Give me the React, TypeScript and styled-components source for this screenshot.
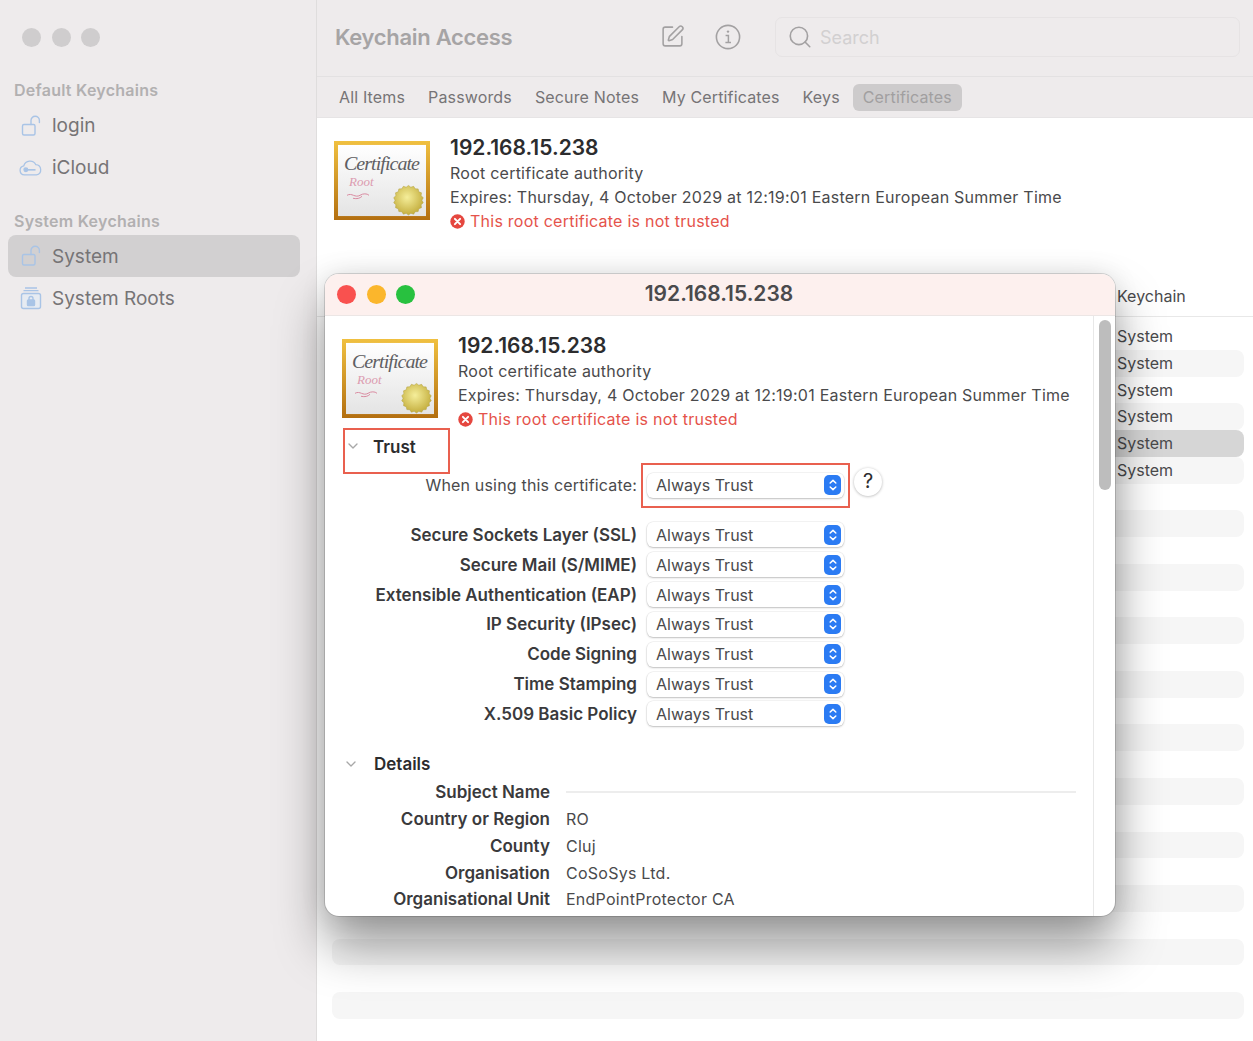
import { useId } from "react";
import styled, { createGlobalStyle } from "styled-components";
import { ChevronDown, Search, SquarePen } from "lucide-react";

const GlobalStyle = createGlobalStyle`
  html, body {
    margin: 0;
    padding: 0;
    height: 100%;
    background: #fff;
    font-family: Inter, "Liberation Sans", sans-serif;
    color: #3a3a3c;
  }
  * { box-sizing: border-box; }
`;

const TRUST_ROWS = [
  "Secure Sockets Layer (SSL)",
  "Secure Mail (S/MIME)",
  "Extensible Authentication (EAP)",
  "IP Security (IPsec)",
  "Code Signing",
  "Time Stamping",
  "X.509 Basic Policy",
];

const DETAIL_ROWS = [
  ["Country or Region", "RO"],
  ["County", "Cluj"],
  ["Organisation", "CoSoSys Ltd."],
  ["Organisational Unit", "EndPointProtector CA"],
];

const TABS = ["All Items", "Passwords", "Secure Notes", "My Certificates", "Keys", "Certificates"];

function OpenLock() {
  return (
    <svg width="24" height="24" viewBox="0 0 24 24" fill="none" stroke="#a9c4e6" strokeWidth="1.4">
      <rect x="4.5" y="10.5" width="12.5" height="10.5" rx="1.5" />
      <path d="M13 10.5V6.5a4.2 4.2 0 0 1 8.4 0v2" strokeLinecap="round" />
    </svg>
  );
}

function KeyCloud() {
  return (
    <svg width="26" height="24" viewBox="0 0 26 24" fill="none" stroke="#a9c4e6" strokeWidth="1.4">
      <path d="M7 19.5a5 5 0 0 1-.7-9.9 7 7 0 0 1 13-1.2 5.6 5.6 0 0 1 .7 11.1z" />
      <circle cx="8.5" cy="14" r="2" fill="#a9c4e6" />
      <path d="M10 14h9" strokeWidth="1.8" />
    </svg>
  );
}

function RootsLock() {
  return (
    <svg width="24" height="24" viewBox="0 0 24 24" fill="none" stroke="#a9c4e6" strokeWidth="1.4">
      <path d="M7 2h12M5.5 4.6h15" />
      <rect x="3.5" y="7.5" width="19" height="15" rx="2" fill="#e6ebf2" />
      <rect x="9.5" y="14" width="7" height="5.5" rx="0.8" fill="#a9c4e6" />
      <path d="M11 14v-1.5a2 2 0 0 1 4 0V14" />
    </svg>
  );
}

function InfoCircle() {
  return (
    <svg width="26" height="26" viewBox="0 0 26 26" fill="none" stroke="#a3a1a2" strokeWidth="1.6">
      <circle cx="13" cy="13" r="11.6" />
      <circle cx="13" cy="7.6" r="1.2" fill="#a3a1a2" stroke="none" />
      <path d="M10.6 11.4H13.4V18.4M10.4 18.6H16" strokeWidth="1.5" />
    </svg>
  );
}

function CertificateIcon() {
  const id = useId();
  return (
    <CertSvg viewBox="0 0 96 80" preserveAspectRatio="none">
      <defs>
        <linearGradient id={id + "frame"} x1="0" y1="0" x2="0" y2="1">
          <stop offset="0" stopColor="#f0c040" />
          <stop offset="1" stopColor="#b36f10" />
        </linearGradient>
        <linearGradient id={id + "paper"} x1="0" y1="0" x2="0" y2="1">
          <stop offset="0" stopColor="#ffffff" />
          <stop offset="1" stopColor="#e4e4e4" />
        </linearGradient>
        <radialGradient id={id + "seal"} cx="0.45" cy="0.4" r="0.6">
          <stop offset="0" stopColor="#f5ee9a" />
          <stop offset="1" stopColor="#c4ae3e" />
        </radialGradient>
      </defs>
      <rect width="96" height="80" fill={`url(#${id}frame)`} />
      <rect x="4" y="4" width="88" height="72" fill={`url(#${id}paper)`} />
      <text x="10" y="29" fontFamily="'Liberation Serif', serif" fontStyle="italic" fontSize="20" fill="#5f5f63" textLength="76">
        Certificate
      </text>
      <text x="15" y="46" fontFamily="'Liberation Serif', serif" fontStyle="italic" fontSize="13" fill="#dc9cb0">
        Root
      </text>
      <path d="M13 55c5-3 8 3 13 0 3-2 7-2 9 0M19 58c4 1 7 0 9-2" fill="none" stroke="#d98aa0" strokeWidth="1" />
      <polygon
        points={Array.from({ length: 36 }, (_, i) => {
          const r = i % 2 ? 15 : 13.4;
          const a = (i * Math.PI) / 18;
          return `${74.5 + r * Math.cos(a)},${60 + r * Math.sin(a)}`;
        }).join(" ")}
        fill={`url(#${id}seal)`}
        stroke="#b39f3c"
        strokeWidth="0.5"
      />
    </CertSvg>
  );
}

function ErrorBadge() {
  return (
    <svg width="15" height="15" viewBox="0 0 15 15">
      <circle cx="7.5" cy="7.5" r="7.2" fill="#e5473f" />
      <path d="M4.9 4.9l5.2 5.2M10.1 4.9l-5.2 5.2" stroke="#fff" strokeWidth="2" strokeLinecap="round" />
    </svg>
  );
}

function Stepper() {
  return (
    <StepperBox>
      <svg width="10" height="14" viewBox="0 0 10 14" fill="none" stroke="#fff" strokeWidth="1.5" strokeLinecap="round" strokeLinejoin="round">
        <path d="M2.2 5L5 2.4 7.8 5M2.2 9L5 11.6 7.8 9" />
      </svg>
    </StepperBox>
  );
}

function TrustSelect() {
  return (
    <SelectBox>
      <span>Always Trust</span>
      <Stepper />
    </SelectBox>
  );
}

function CertSummary() {
  return (
    <Summary>
      <CertificateIcon />
      <SummaryText>
        <CertName>192.168.15.238</CertName>
        <CertLine>Root certificate authority</CertLine>
        <CertLine>Expires: Thursday, 4 October 2029 at 12:19:01 Eastern European Summer Time</CertLine>
        <CertError>
          <ErrorBadge />
          This root certificate is not trusted
        </CertError>
      </SummaryText>
    </Summary>
  );
}

export default function App() {
  return (
    <Desktop>
      <GlobalStyle />
      <Sidebar>
        <Lights>
          <Light $color="#cfcdce" />
          <Light $color="#cfcdce" />
          <Light $color="#cfcdce" />
        </Lights>
        <GroupLabel>Default Keychains</GroupLabel>
        <SideItem><OpenLock />login</SideItem>
        <SideItem><KeyCloud />iCloud</SideItem>
        <GroupLabel $second>System Keychains</GroupLabel>
        <SideItem $active><OpenLock />System</SideItem>
        <SideItem><RootsLock />System Roots</SideItem>
      </Sidebar>

      <Main>
        <Toolbar>
          <AppTitle>Keychain Access</AppTitle>
          <ToolIcons>
            <SquarePen size={25} strokeWidth={1.5} color="#a3a1a2" />
            <InfoCircle />
          </ToolIcons>
          <SearchField>
            <Search size={26} strokeWidth={1.5} color="#a3a1a2" />
            Search
          </SearchField>
        </Toolbar>
        <TabBar>
          {TABS.map((tab) => (
            <Tab key={tab} $active={tab === "Certificates"}>{tab}</Tab>
          ))}
        </TabBar>
        <TopCert>
          <CertSummary />
        </TopCert>
        <ColumnHeader>Keychain</ColumnHeader>
        <Table>
          {Array.from({ length: 26 }, (_, i) => (
            <TableRow key={i} $striped={i % 2 === 1} $selected={i === 4}>
              {i < 6 ? "System" : ""}
            </TableRow>
          ))}
        </Table>
      </Main>

      <Sheet>
        <SheetTitleBar>
          <SheetLights>
            <Light $color="#f9514f" />
            <Light $color="#fbb62c" />
            <Light $color="#28c13f" />
          </SheetLights>
          <SheetTitle>192.168.15.238</SheetTitle>
        </SheetTitleBar>
        <SheetBody>
          <SheetContent>
            <CertSummary />
            <TrustHead>
              <ChevronDown size={16} color="#a8a8a8" />
              Trust
            </TrustHead>
            <WhenRow>
              <WhenLabel>When using this certificate:</WhenLabel>
              <RedBox><TrustSelect /></RedBox>
              <HelpButton>?</HelpButton>
            </WhenRow>
            <PolicyList>
              {TRUST_ROWS.map((row) => (
                <PolicyRow key={row}>
                  <PolicyLabel>{row}</PolicyLabel>
                  <TrustSelect />
                </PolicyRow>
              ))}
            </PolicyList>
            <DetailsHead>
              <ChevronDown size={16} color="#a8a8a8" />
              Details
            </DetailsHead>
            <DetailRow>
              <DetailLabel>Subject Name</DetailLabel>
              <DetailRule />
            </DetailRow>
            {DETAIL_ROWS.map(([label, value]) => (
              <DetailRow key={label}>
                <DetailLabel>{label}</DetailLabel>
                <DetailValue>{value}</DetailValue>
              </DetailRow>
            ))}
          </SheetContent>
          <ScrollGutter>
            <ScrollThumb />
          </ScrollGutter>
        </SheetBody>
      </Sheet>
    </Desktop>
  );
}

const Desktop = styled.div`
  position: relative;
  display: flex;
  width: 1253px;
  height: 1041px;
  overflow: hidden;
  background: #fff;
`;

const Sidebar = styled.aside`
  width: 317px;
  flex: none;
  padding: 28px 16px 0 8px;
  background: #eeebec;
  border-right: 1px solid #dfdddd;
`;

const Lights = styled.div`
  display: flex;
  gap: 10.5px;
  padding-left: 14px;
  margin-bottom: 33px;
`;

const Light = styled.span<{ $color: string }>`
  width: 19px;
  height: 19px;
  border-radius: 50%;
  background: ${(p) => p.$color};
`;

const GroupLabel = styled.div<{ $second?: boolean }>`
  height: 20px;
  margin: ${(p) => (p.$second ? "22px" : "0")} 0 4.5px 6px;
  font-size: 16px;
  line-height: 20px;
  font-weight: 600;
  letter-spacing: 0.25px;
  color: #b2b0b1;
`;

const SideItem = styled.div<{ $active?: boolean }>`
  display: flex;
  align-items: center;
  gap: 10px;
  height: 42px;
  padding-left: 10px;
  border-radius: 8px;
  font-size: 19px;
  color: #767476;
  background: ${(p) => (p.$active ? "#d2d0d1" : "transparent")};

  svg { width: 24px; flex: none; }
`;

const Main = styled.main`
  flex: 1;
  min-width: 0;
  display: flex;
  flex-direction: column;
`;

const Toolbar = styled.header`
  display: flex;
  align-items: center;
  height: 77px;
  padding: 0 13px 3px 18px;
  background: #eeebec;
  border-bottom: 1px solid #e3e1e2;
`;

const AppTitle = styled.h1`
  width: 325px;
  margin: 0;
  font-size: 22px;
  font-weight: 600;
  letter-spacing: -0.3px;
  color: #a6a4a5;
`;

const ToolIcons = styled.div`
  display: flex;
  align-items: center;
  gap: 30px;
  width: 115px;
`;

const SearchField = styled.div`
  flex: 1;
  display: flex;
  align-items: center;
  gap: 7px;
  height: 40px;
  margin-top: 1px;
  padding-left: 11px;
  border: 1px solid #e6e3e4;
  border-radius: 7px;
  font-size: 18px;
  color: #d2d0d1;
`;

const TabBar = styled.nav`
  display: flex;
  align-items: center;
  gap: 3px;
  height: 41px;
  padding-left: 12px;
  background: #eeebec;
  border-bottom: 1px solid #e6e4e5;
`;

const Tab = styled.span<{ $active?: boolean }>`
  padding: 0 10px;
  height: 27px;
  line-height: 27px;
  border-radius: 6px;
  font-size: 16px;
  letter-spacing: 0.15px;
  color: ${(p) => (p.$active ? "#a19fa0" : "#767476")};
  background: ${(p) => (p.$active ? "#cdcbcc" : "transparent")};
`;

const TopCert = styled.section`
  height: 152px;
  padding: 23px 17px 0;
`;

const Summary = styled.div`
  display: flex;
  gap: 20px;
`;

const CertSvg = styled.svg`
  width: 96px;
  height: 79px;
  flex: none;
`;

const SummaryText = styled.div`
  display: flex;
  flex-direction: column;
  margin-top: -6px;
`;

const CertName = styled.div`
  height: 26px;
  font-size: 21px;
  line-height: 26px;
  font-weight: 600;
  color: #2c2c2e;
`;

const CertLine = styled.div`
  height: 24px;
  font-size: 16px;
  line-height: 24px;
  letter-spacing: 0.24px;
  color: #4a4a4c;
`;

const CertError = styled(CertLine)`
  display: flex;
  align-items: center;
  gap: 5px;
  color: #e5534b;
`;

const ColumnHeader = styled.div`
  height: 47px;
  padding: 14px 0 0 800px;
  font-size: 16px;
  line-height: 24px;
  color: #4a4a4c;
  border-bottom: 1px solid #e8e8e8;
`;

const Table = styled.div`
  flex: 1;
  padding: 6px 9px 0 15px;
  overflow: hidden;
`;

const TableRow = styled.div<{ $striped: boolean; $selected: boolean }>`
  height: 26.78px;
  padding-left: 785px;
  border-radius: 8px;
  font-size: 16px;
  line-height: 26px;
  color: #4a4a4c;
  background: ${(p) => (p.$selected ? "#d6d6d6" : p.$striped ? "#f6f6f6" : "transparent")};
`;

const Sheet = styled.div`
  position: absolute;
  left: 325px;
  top: 274px;
  width: 790px;
  height: 642px;
  display: flex;
  flex-direction: column;
  overflow: hidden;
  border-radius: 14px;
  background: #fff;
  box-shadow: 0 0 0 1px rgba(0, 0, 0, 0.14), 0 30px 50px rgba(0, 0, 0, 0.4), 0 0 26px rgba(0, 0, 0, 0.1);
`;

const SheetTitleBar = styled.div`
  position: relative;
  flex: none;
  display: flex;
  align-items: center;
  justify-content: center;
  height: 42px;
  padding-bottom: 2px;
  background: #fdf0ee;
  border-bottom: 1px solid #ece6e5;
`;

const SheetLights = styled.div`
  position: absolute;
  left: 12px;
  top: 11px;
  display: flex;
  gap: 10.5px;
`;

const SheetTitle = styled.div`
  margin-left: -2px;
  font-size: 21px;
  font-weight: 600;
  color: #4a4a4c;
`;

const SheetBody = styled.div`
  flex: 1;
  min-height: 0;
  display: flex;
`;

const SheetContent = styled.div`
  flex: 1;
  min-width: 0;
  padding: 23px 0 0 17px;
  overflow: hidden;
`;

const ScrollGutter = styled.div`
  width: 22px;
  flex: none;
  padding: 4px 4px 0 5px;
  border-left: 1px solid #e8e8e8;
`;

const ScrollThumb = styled.div`
  height: 170px;
  border-radius: 6px;
  background: #bdbdbd;
`;

const TrustHead = styled.div`
  display: flex;
  align-items: flex-start;
  gap: 12px;
  width: 107px;
  height: 46px;
  margin: -3px 0 0 1px;
  padding: 6px 0 0;
  border: 2px solid #e9604f;
  font-size: 17px;
  line-height: 22px;
  font-weight: 600;
  color: #2c2c2e;

  svg { margin-top: 2px; }
`;

const WhenRow = styled.div`
  display: flex;
  align-items: center;
  height: 46px;
  margin-top: -12px;
`;

const WhenLabel = styled.div`
  width: 295px;
  margin-right: 4px;
  text-align: right;
  font-size: 16px;
  letter-spacing: 0.18px;
  color: #4a4a4c;
`;

const RedBox = styled.div`
  display: flex;
  align-items: center;
  width: 209px;
  height: 45px;
  padding-left: 4px;
  border: 2px solid #e9604f;
`;

const HelpButton = styled.div`
  width: 28px;
  height: 28px;
  margin: -6px 0 0 4px;
  border-radius: 50%;
  text-align: center;
  font-size: 20px;
  line-height: 26px;
  color: #2c2c2e;
  background: #fff;
  box-shadow: 0 0.5px 3px rgba(0, 0, 0, 0.3);
`;

const PolicyList = styled.div`
  margin-top: 12px;
`;

const PolicyRow = styled.div`
  display: flex;
  align-items: center;
  gap: 10px;
  height: 29.85px;
`;

const PolicyLabel = styled.div`
  width: 295px;
  text-align: right;
  white-space: nowrap;
  font-size: 17px;
  font-weight: 600;
  color: #3a3a3c;
`;

const SelectBox = styled.div`
  display: flex;
  align-items: center;
  justify-content: space-between;
  width: 197px;
  height: 25px;
  padding: 0 3px 0 9px;
  border-radius: 6px;
  background: #fff;
  font-size: 16px;
  color: #4a4a4c;
  box-shadow: 0 0 0 0.5px rgba(0, 0, 0, 0.08), 0 1px 2px rgba(0, 0, 0, 0.22);
`;

const StepperBox = styled.span`
  display: flex;
  align-items: center;
  justify-content: center;
  width: 17px;
  height: 20px;
  border-radius: 5px;
  background: #2b7bf3;
`;

const DetailsHead = styled.div`
  display: flex;
  align-items: center;
  gap: 15px;
  height: 22px;
  margin: 24px 0 4px;
  padding-left: 1px;
  font-size: 17px;
  font-weight: 600;
  color: #2c2c2e;
`;

const DetailRow = styled.div`
  display: flex;
  align-items: center;
  gap: 16px;
  height: 26.75px;
`;

const DetailLabel = styled.div`
  width: 208px;
  flex: none;
  text-align: right;
  font-size: 17px;
  font-weight: 600;
  color: #3a3a3c;
`;

const DetailValue = styled.div`
  font-size: 16px;
  letter-spacing: 0.25px;
  color: #4a4a4c;
`;

const DetailRule = styled.div`
  width: 510px;
  height: 2px;
  background: #ededed;
`;
